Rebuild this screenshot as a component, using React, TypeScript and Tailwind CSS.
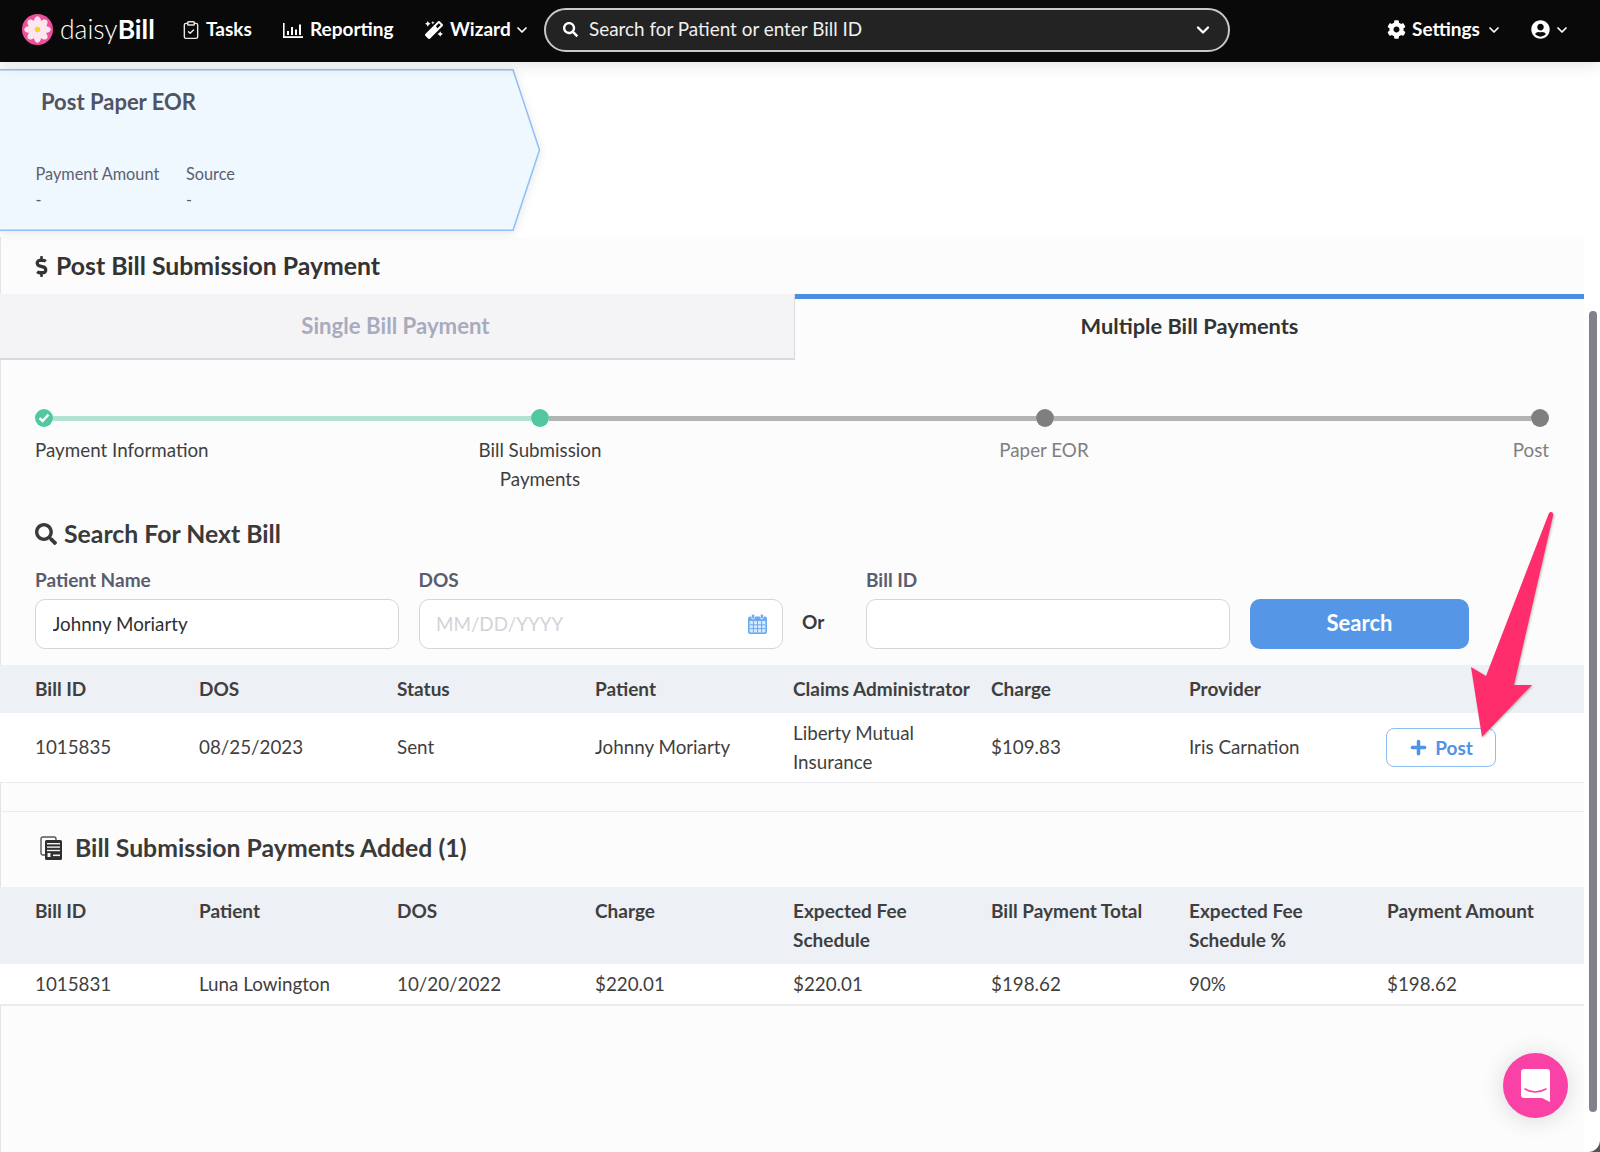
import { ChevronDown, ClipboardCheck, Plus } from 'lucide-react'
import { FaCog, FaDollarSign, FaMagic, FaSearch, FaUserCircle } from 'react-icons/fa'

const cols = 'grid grid-cols-[164px_repeat(7,198px)] pl-[35px]'

function Logo() {
  const petals = [0, 45, 90, 135, 180, 225, 270, 315]
  return (
    <svg width="31" height="31" viewBox="0 0 30 30">
      <circle cx="15" cy="15" r="15" fill="#ee4f9b" />
      {petals.map(a => (
        <ellipse key={a} cx="15" cy="7.8" rx="3.5" ry="5.6" fill="#fde6f0" transform={`rotate(${a} 15 15)`} />
      ))}
      <circle cx="15" cy="15" r="2.6" fill="#f7d51d" />
    </svg>
  )
}

function ReportIcon() {
  return (
    <svg width="20" height="16" viewBox="0 0 20 16" fill="#fff">
      <rect x="0" y="1" width="1.6" height="15" />
      <rect x="0" y="14.2" width="20" height="1.8" />
      <rect x="4" y="9" width="2" height="4" />
      <rect x="8" y="5" width="2" height="8" />
      <rect x="12" y="7.5" width="2" height="5.5" />
      <rect x="16" y="2.5" width="2" height="10.5" />
    </svg>
  )
}

function BillsIcon() {
  return (
    <svg width="23" height="24" viewBox="0 0 23 24">
      <rect x="1" y="1" width="15" height="18" rx="2" fill="none" stroke="#555" strokeWidth="1.4" />
      <rect x="5" y="4" width="17" height="20" rx="1.5" fill="#2f2f2f" />
      <g fill="#f4f4f4">
        <rect x="7" y="7" width="13" height="1.4" />
        <rect x="7" y="10.4" width="13" height="1.4" />
        <rect x="7" y="13.8" width="13" height="1.4" />
        <rect x="13" y="18.5" width="7" height="1.6" />
        <rect x="7.5" y="17" width="3" height="4" />
      </g>
    </svg>
  )
}

function CalendarIcon() {
  return (
    <svg width="19" height="20" viewBox="0 0 19 20">
      <rect x="0" y="2.5" width="19" height="17.5" rx="2" fill="#6ba9f0" />
      <rect x="3.6" y="0" width="3" height="5" rx="1.5" fill="#6ba9f0" stroke="#fff" strokeWidth="0.7" />
      <rect x="12.4" y="0" width="3" height="5" rx="1.5" fill="#6ba9f0" stroke="#fff" strokeWidth="0.7" />
      <g fill="#d9e9fc">
        <rect x="1.6" y="7" width="15.8" height="11.4" />
      </g>
      <g stroke="#6ba9f0" strokeWidth="1">
        <path d="M5.4 7v11.4M9.5 7v11.4M13.6 7v11.4M1.6 10.8h15.8M1.6 14.6h15.8" />
      </g>
    </svg>
  )
}

function NavBar() {
  return (
    <header className="relative z-10 flex h-[62px] items-center bg-[#090909] pb-[3px] pl-[22px] text-white shadow-[0_4px_14px_rgba(0,0,0,0.1)]">
      <Logo />
      <span className="ml-[7px] flex w-[96px] text-[26.5px] leading-none">
        <span className="font-light">daisy</span>
        <span className="font-bold">Bill</span>
      </span>
      <ClipboardCheck size={20} strokeWidth={1.7} className="ml-[25px] text-[#e8e8e8]" />
      <span className="ml-[5px] w-[47px] text-[19px] font-bold">Tasks</span>
      <span className="ml-[30px]"><ReportIcon /></span>
      <span className="ml-[7px] w-[83px] text-[19px] font-bold">Reporting</span>
      <FaMagic size={18} className="ml-[32px]" />
      <span className="ml-[7px] w-[59px] text-[19px] font-bold">Wizard</span>
      <ChevronDown size={16} strokeWidth={2.6} className="ml-[5px]" />
      <div className="ml-[14px] flex h-[44px] w-[686px] items-center rounded-full border-2 border-[#c8c8c8] bg-[#232323] pl-[17px] pr-[15px]">
        <FaSearch size={15} />
        <span className="ml-[11px] flex-1 text-[18.9px] text-[#f0f0f0]">Search for Patient or enter Bill ID</span>
        <ChevronDown size={20} strokeWidth={2.8} />
      </div>
      <FaCog size={19} className="ml-[157px]" />
      <span className="ml-[6px] w-[70px] text-[19px] font-bold">Settings</span>
      <ChevronDown size={16} strokeWidth={2.6} className="ml-[4px]" />
      <FaUserCircle size={19} className="ml-[29px]" />
      <ChevronDown size={16} strokeWidth={2.6} className="ml-[4px]" />
    </header>
  )
}

function EorPanel() {
  return (
    <div className="relative mt-[7px] h-[162px] w-[541px] text-[#5c5f6e]">
      <svg className="absolute inset-0 drop-shadow-[0_2px_5px_rgba(0,0,0,0.1)]" width="541" height="162" viewBox="0 0 541 162">
        <path d="M-2 .75H513L539.5 81 513 161.25H-2Z" fill="#eff7ff" stroke="#8fc0f4" strokeWidth="1.5" />
      </svg>
      <div className="relative pl-[41px] pt-[19px] text-[22px] font-bold leading-[27px] text-[#505362]">Post Paper EOR</div>
      <div className="relative mt-[46px] flex pl-[35.5px] text-[16.3px] leading-[26px]">
        <div className="w-[150.5px]">
          <div>Payment Amount</div>
          <div>-</div>
        </div>
        <div>
          <div>Source</div>
          <div>-</div>
        </div>
      </div>
    </div>
  )
}

function Stepper() {
  return (
    <div className="px-[35px] pt-[49px] text-[18.8px] leading-[29px]">
      <div className="flex items-center">
        <span className="flex h-[18px] w-[18px] items-center justify-center rounded-full bg-[#52c7a0]">
          <svg width="12" height="10" viewBox="0 0 12 10" fill="none" stroke="#fff" strokeWidth="2.4"><path d="M1.5 5.2 4.6 8 10.5 1.6" /></svg>
        </span>
        <div className="h-[5px] w-[478px] bg-[#b3e3d0]" />
        <span className="h-[18px] w-[18px] rounded-full bg-[#52c7a0]" />
        <div className="h-[5px] w-[487px] bg-[#b3b3b3]" />
        <span className="h-[18px] w-[18px] rounded-full bg-[#7f7f7f]" />
        <div className="h-[5px] flex-1 bg-[#b3b3b3]" />
        <span className="h-[18px] w-[18px] rounded-full bg-[#7f7f7f]" />
      </div>
      <div className="mt-[8px] flex">
        <div className="w-[410px] text-[#3f3f3f]">Payment Information</div>
        <div className="w-[190px] text-center text-[#3f3f3f]">Bill Submission<br />Payments</div>
        <div className="ml-[314px] w-[190px] text-center text-[#808080]">Paper EOR</div>
        <div className="flex-1 text-right text-[#808080]">Post</div>
      </div>
    </div>
  )
}

function SearchForm() {
  const field = 'h-[50px] w-[364px] rounded-[10px] border border-[#d6d6d9] bg-white px-[16.5px] pb-[2px] text-[18.8px] text-[#2f2f2f] placeholder:text-[#d2d3da] outline-none'
  const label = 'mb-[7px] text-[19px] font-bold leading-[24px] text-[#5a5d6e]'
  return (
    <div className="px-[35px]">
      <h2 className="mt-[24px] flex h-[34px] items-center gap-[7px] text-[24.8px] font-bold text-[#3a3a3a]">
        <FaSearch size={22} />
        Search For Next Bill
      </h2>
      <div className="mt-[17px] flex items-end">
        <div>
          <div className={label}>Patient Name</div>
          <input readOnly defaultValue="Johnny Moriarty" className={field} />
        </div>
        <div className="ml-[19.5px]">
          <div className={label}>DOS</div>
          <div className="relative">
            <input readOnly placeholder="MM/DD/YYYY" className={field} />
            <span className="absolute right-[16px] top-[15px]"><CalendarIcon /></span>
          </div>
        </div>
        <span className="ml-[19.5px] w-[64px] pb-[15px] text-[19px] font-bold leading-[24px] text-[#3a3a3a]">Or</span>
        <div>
          <div className={label}>Bill ID</div>
          <input readOnly className={field} />
        </div>
        <button className="ml-[20px] h-[50px] w-[219px] rounded-[10px] bg-[#5597e6] pb-[3px] text-[22px] font-bold text-white">Search</button>
      </div>
    </div>
  )
}

const foundHead = ['Bill ID', 'DOS', 'Status', 'Patient', 'Claims Administrator', 'Charge', 'Provider']
const addedHead = ['Bill ID', 'Patient', 'DOS', 'Charge', 'Expected Fee Schedule', 'Bill Payment Total', 'Expected Fee Schedule %', 'Payment Amount']
const addedRow = ['1015831', 'Luna Lowington', '10/20/2022', '$220.01', '$220.01', '$198.62', '90%', '$198.62']

function FoundTable() {
  return (
    <div className="mt-[16px] text-[18.8px] leading-[29px] text-[#3f3f3f]">
      <div className={`${cols} h-[48px] items-center bg-[#edf0f5] pb-[1px] text-[19px] font-bold`}>
        {foundHead.map(h => <div key={h} className="whitespace-nowrap">{h}</div>)}
      </div>
      <div className={`${cols} h-[70px] items-center border-b border-[#ececee] bg-white pb-[2px]`}>
        <div>1015835</div>
        <div>08/25/2023</div>
        <div>Sent</div>
        <div>Johnny Moriarty</div>
        <div className="pr-[40px]">Liberty Mutual Insurance</div>
        <div>$109.83</div>
        <div>Iris Carnation</div>
        <button className="ml-[-1px] mt-[2px] flex h-[39px] w-[110px] items-center justify-center gap-[6px] rounded-[8px] border border-[#8dbcf0] bg-white pb-[1px] pr-[1px] text-[19px] font-bold text-[#4f93e4]">
          <Plus size={21} strokeWidth={4} />
          Post
        </button>
      </div>
    </div>
  )
}

function AddedTable() {
  return (
    <div className="mt-[28px] border-t border-[#ececee]">
      <h2 className="flex h-[75px] items-center gap-[12px] pb-[3px] pl-[40px] text-[24.8px] font-bold text-[#3a3a3a]">
        <BillsIcon />
        Bill Submission Payments Added (1)
      </h2>
      <div className="text-[18.8px] leading-[29px] text-[#3f3f3f]">
        <div className={`${cols} h-[77px] bg-[#edf0f5] pt-[9px] text-[19px] font-bold`}>
          {addedHead.map(h => <div key={h} className="pr-[20px]">{h}</div>)}
        </div>
        <div className={`${cols} h-[42px] items-center border-b-2 border-[#ebebed] bg-white pb-[2px]`}>
          {addedRow.map((c, i) => <div key={i}>{c}</div>)}
        </div>
      </div>
    </div>
  )
}

export default function App() {
  return (
    <div className="relative h-[1152px] w-[1600px] overflow-hidden bg-white font-['Lato',sans-serif]">
      <NavBar />
      <EorPanel />
      <main className="mt-[6px] h-[915px] w-[1584px] bg-[#fcfcfc] shadow-[inset_1px_0_0_#e4e4e4]">
        <h1 className="flex h-[57px] items-center gap-[4px] pl-[31px] pt-[1px] text-[24.8px] font-bold text-[#333]">
          <FaDollarSign size={21} />
          Post Bill Submission Payment
        </h1>
        <div className="flex h-[66px]">
          <div className="flex w-[795px] items-center justify-center border-b-2 border-r border-[#d9d9df] bg-[#f4f4f7] pr-[3px] text-[22.2px] font-bold text-[#a9abbd]">
            Single Bill Payment
          </div>
          <div className="flex flex-1 items-center justify-center border-t-[5px] border-[#4a90e2] pb-[7px] text-[21.8px] font-bold text-[#333]">
            Multiple Bill Payments
          </div>
        </div>
        <Stepper />
        <SearchForm />
        <FoundTable />
        <AddedTable />
      </main>

      {/* annotation arrow pasted over the screenshot */}
      <svg className="absolute left-[1460px] top-[505px] drop-shadow-[1px_1px_1px_rgba(0,0,0,0.25)]" width="100" height="240" viewBox="1460 505 100 240">
        <path d="M1549 513C1551 511 1554 512 1553 516L1514 685H1532L1482 737L1471 667L1486 676Z" fill="#ff2d6c" />
      </svg>

      {/* chat launcher */}
      <button className="absolute left-[1503px] top-[1053px] flex h-[65px] w-[65px] items-center justify-center rounded-full bg-[#f941a6] shadow-[0_2px_24px_rgba(0,0,0,0.14)]">
        <svg width="30" height="33" viewBox="0 0 30 33">
          <path d="M3 0H26Q29 0 29 3V33L21 29H3Q0 29 0 26V3Q0 0 3 0Z" fill="#fff" />
          <path d="M4 20Q14 26 25 20" fill="none" stroke="#f941a6" strokeWidth="1.6" strokeLinecap="round" />
        </svg>
      </button>

      {/* overlay scrollbar */}
      <div className="absolute left-[1589px] top-[311px] h-[801px] w-[8px] rounded-full bg-[#80818d]" />
      <div className="absolute bottom-0 right-0 h-[14px] w-[14px] bg-[#555]">
        <div className="h-full w-full rounded-br-[12px] bg-white" />
      </div>
    </div>
  )
}
